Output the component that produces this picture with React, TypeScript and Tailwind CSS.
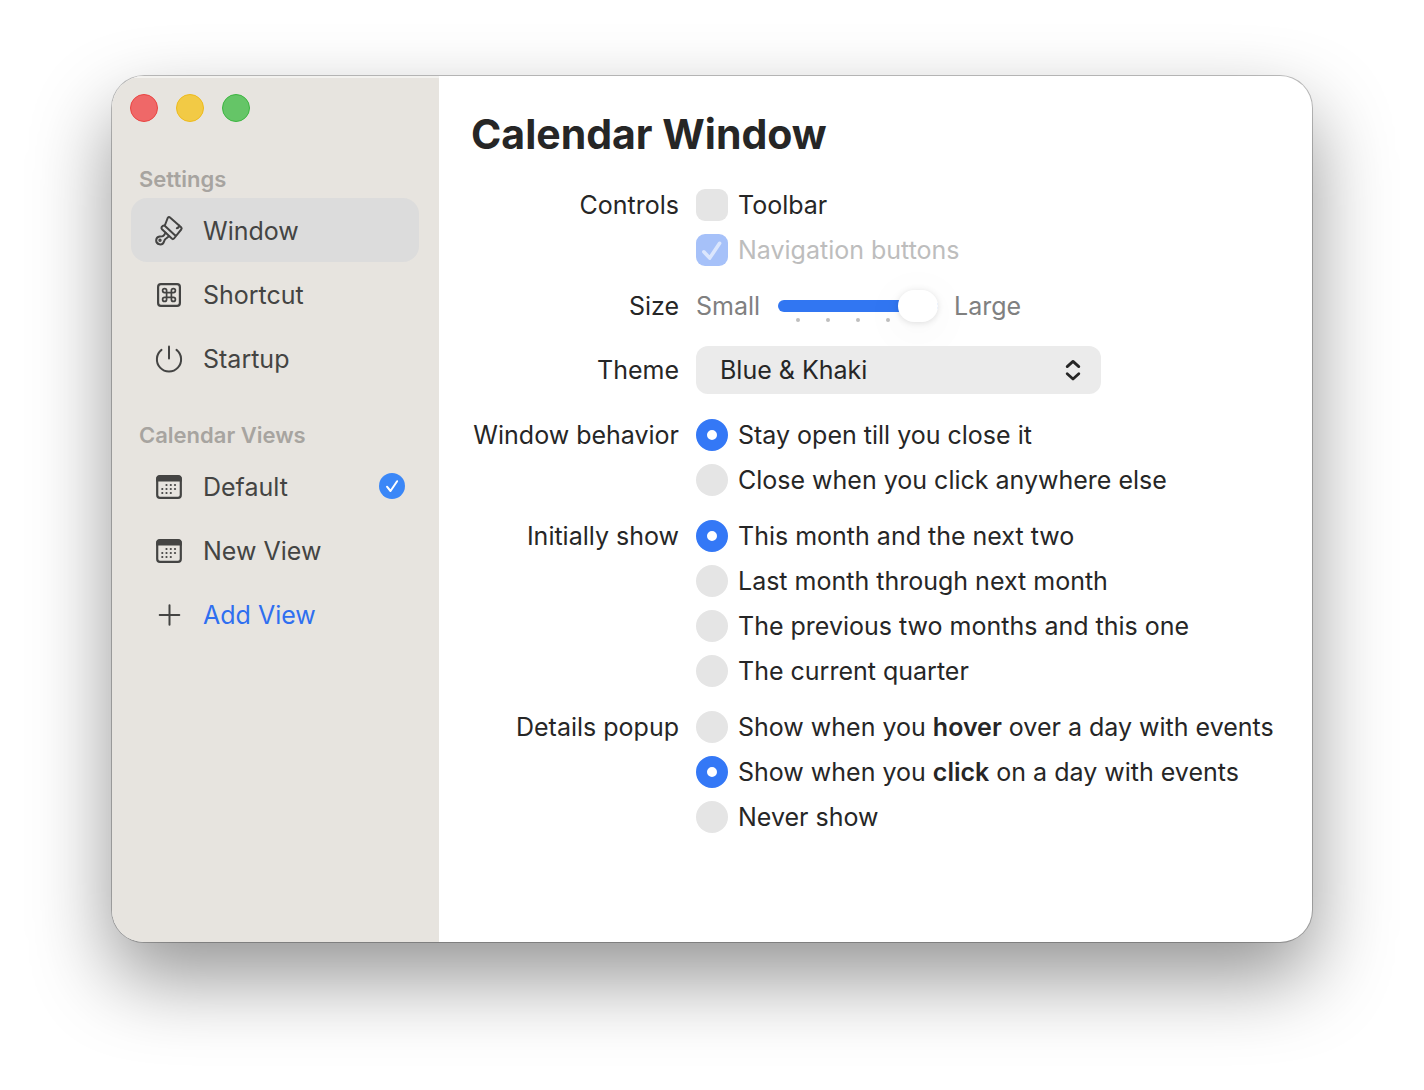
import { useState, type ReactNode } from "react";

function BrushIcon() {
  return (
    <svg viewBox="0 0 32 32" className="size-8" fill="none" stroke="currentColor" strokeWidth="2" strokeLinejoin="round" strokeLinecap="round" aria-hidden="true">
      <path d="M12 10L14.700 3Q15.700 1.200 17.300 2.700L28.100 12.200Q29.200 13.300 28.200 14.500L21 23.500Q20 24.700 18.800 23.600L9 14.300Q8 13.300 8.700 12L9.800 10.900Q11 10 12 11L22.500 20.800" />
      <path d="M26 10.400Q26.400 12.600 23.800 13.200" />
      <path d="M12.600 17.800L11 20.200Q10.400 21 9.300 21.200L6.600 21.400A4 4 0 1 0 10.900 26.800L11.700 24.900Q12.200 24 13.100 23.500L16 21.300" />
      <circle cx="7" cy="25.300" r="0.7" fill="currentColor" />
    </svg>
  );
}

function CommandIcon() {
  return (
    <svg viewBox="0 0 32 32" className="size-8" fill="none" stroke="currentColor" aria-hidden="true">
      <rect x="5.1" y="5.1" width="21.8" height="21.8" rx="2.8" strokeWidth="2.2" />
      <path strokeWidth="1.7" d="M13.6 13.6h4.8v4.8h-4.8zM13.6 13.6h-2a2 2 0 1 1 2-2zM18.4 13.6h2a2 2 0 1 0-2-2zM13.6 18.4h-2a2 2 0 1 0 2 2zM18.4 18.4h2a2 2 0 1 1-2 2z" />
    </svg>
  );
}

function PowerIcon() {
  return (
    <svg viewBox="0 0 32 32" className="size-8" fill="none" stroke="currentColor" strokeWidth="2" strokeLinecap="round" aria-hidden="true">
      <path d="M16 3.6v12" />
      <path d="M8.5 6.900a12.100 12.100 0 1 0 15 0" />
    </svg>
  );
}

function CalendarIcon() {
  const dots = [
    [13.5, 14], [17.8, 14], [22, 14],
    [9.3, 18], [13.5, 18], [17.8, 18], [22, 18],
    [9.3, 22], [13.5, 22], [17.8, 22],
  ];
  return (
    <svg viewBox="0 0 32 32" className="size-8" fill="none" stroke="currentColor" aria-hidden="true">
      <rect x="4.2" y="5.2" width="23.6" height="21.6" rx="2.8" strokeWidth="2.2" />
      <path d="M3.2 10.4V8a3.500 3.500 0 0 1 3.500-3.500h18.600A3.500 3.500 0 0 1 28.800 8v2.400z" fill="currentColor" stroke="none" />
      {dots.map(([x, y]) => (
        <circle key={`${x}-${y}`} cx={x} cy={y} r="1.1" fill="currentColor" stroke="none" />
      ))}
    </svg>
  );
}

function PlusIcon() {
  return (
    <svg viewBox="0 0 32 32" className="size-8" fill="none" stroke="currentColor" strokeWidth="2" strokeLinecap="round" aria-hidden="true">
      <path d="M16.500 6.200v19.600M6.700 16h19.600" />
    </svg>
  );
}

function NavItem({ icon, label, active, accent, trailing }: { icon: ReactNode; label: string; active?: boolean; accent?: boolean; trailing?: ReactNode }) {
  return (
    <li>
      <button
        type="button"
        aria-current={active ? "page" : undefined}
        className={`flex h-16 w-full items-center gap-[18px] rounded-2xl pt-0.5 pr-3.5 pl-[22px] text-left text-[#444443] ${active ? "bg-[#dcdcdc]" : ""}`}
      >
        {icon}
        <span className={`flex-1 ${accent ? "text-[#2f6ff0]" : ""}`}>{label}</span>
        {trailing}
      </button>
    </li>
  );
}

function Row({ label, children }: { label: string; children: ReactNode }) {
  return (
    <div role="group" aria-label={label} className="grid grid-cols-[208px_1fr] gap-x-[17px]">
      <div className="flex h-8 items-center justify-end whitespace-nowrap">{label}</div>
      <div className="flex flex-col items-start gap-[13px]">{children}</div>
    </div>
  );
}

function CheckOption({ label, checked, disabled }: { label: string; checked?: boolean; disabled?: boolean }) {
  return (
    <label className={`flex h-8 items-center gap-2.5 whitespace-nowrap ${disabled ? "text-[#bdbdbd]" : ""}`}>
      <span className="relative grid size-8 shrink-0 place-items-center">
        <input type="checkbox" defaultChecked={checked} disabled={disabled} className="peer size-8 appearance-none rounded-[9px] bg-[#e5e5e5] checked:bg-[#3478f6] disabled:checked:bg-[#a6c1f9]" />
        <svg viewBox="0 0 32 32" className="pointer-events-none absolute size-8 opacity-0 peer-checked:opacity-100" fill="none" stroke={disabled ? "#dbe6fd" : "#fff"} strokeWidth="3.6" strokeLinecap="round" strokeLinejoin="round" aria-hidden="true">
          <path d="M7.800 17.800l5.900 6.300 9.900-14.800" />
        </svg>
      </span>
      <span>{label}</span>
    </label>
  );
}

function RadioGroup({ name, options, initial }: { name: string; options: ReactNode[]; initial: number }) {
  const [selected, setSelected] = useState(initial);
  return (
    <>
      {options.map((option, i) => (
        <label key={i} className="flex h-8 items-center gap-2.5 whitespace-nowrap">
          <input
            type="radio"
            name={name}
            checked={selected === i}
            onChange={() => setSelected(i)}
            className="size-8 shrink-0 appearance-none rounded-full border-[#3478f6] bg-[#e5e5e5] checked:border-[11px] checked:bg-white"
          />
          <span>{option}</span>
        </label>
      ))}
    </>
  );
}

function SizeSlider() {
  return (
    <div className="flex h-8 items-center gap-4 text-[#808080]">
      <span className="w-[66px]">Small</span>
      <div className="relative h-8 w-40">
        <div className="absolute inset-x-[18px] bottom-0 flex justify-between" aria-hidden="true">
          {[0, 1, 2, 3, 4].map((i) => (
            <span key={i} className="size-1 rounded-full bg-[#bfbfbf]" />
          ))}
        </div>
        <input
          type="range"
          aria-label="Size"
          min={0}
          max={4}
          defaultValue={4}
          className="absolute inset-0 h-8 w-40 appearance-none bg-transparent [&::-webkit-slider-runnable-track]:h-3 [&::-webkit-slider-runnable-track]:rounded-full [&::-webkit-slider-runnable-track]:bg-[#3176f2] [&::-webkit-slider-thumb]:-mt-2.5 [&::-webkit-slider-thumb]:h-8 [&::-webkit-slider-thumb]:w-10 [&::-webkit-slider-thumb]:appearance-none [&::-webkit-slider-thumb]:rounded-full [&::-webkit-slider-thumb]:bg-white [&::-webkit-slider-thumb]:shadow-[0_1px_6px_rgba(0,0,0,0.12),0_8px_48px_rgba(0,0,0,0.06)]"
        />
      </div>
      <span>Large</span>
    </div>
  );
}

export default function App() {
  return (
    <div className="min-h-screen bg-white px-28 pt-19 pb-[148px] font-['Inter','Liberation_Sans',sans-serif] text-[25px] leading-8 text-[#262626]">
      <div className="flex min-h-[866px] overflow-hidden rounded-[32px] bg-white shadow-[0_0_0_1px_rgba(0,0,0,0.24),0_36px_80px_rgba(0,0,0,0.42)]">
        <aside className="w-[327px] shrink-0 bg-[#e7e4df] pt-[18px] pr-5 pl-[19px] shadow-[inset_0_2px_0_rgba(255,255,255,0.5)]">
          <div className="-ml-px flex gap-[18px]">
            <button type="button" aria-label="Close" className="size-7 rounded-full border border-[#e94441] bg-[#ef6868]" />
            <button type="button" aria-label="Minimize" className="size-7 rounded-full border border-[#edba1c] bg-[#f2ca45]" />
            <button type="button" aria-label="Zoom" className="size-7 rounded-full border border-[#3cb540] bg-[#65c567]" />
          </div>
          <nav>
            <h2 className="mt-[41px] mb-[3px] pl-2 text-[22px] font-semibold text-[#a7a4a0]">Settings</h2>
            <ul>
              <NavItem icon={<BrushIcon />} label="Window" active />
              <NavItem icon={<CommandIcon />} label="Shortcut" />
              <NavItem icon={<PowerIcon />} label="Startup" />
            </ul>
            <h2 className="mt-[29px] mb-[3px] pl-2 text-[22px] font-semibold text-[#a7a4a0]">Calendar Views</h2>
            <ul>
              <NavItem
                icon={<CalendarIcon />}
                label="Default"
                trailing={
                  <svg viewBox="0 0 26 26" className="mb-0.5 size-[26px]" role="img" aria-label="Selected">
                    <circle cx="13" cy="13" r="13" fill="#3b87f7" />
                    <path d="M8 13.700l3.500 4.300 6.600-9.800" fill="none" stroke="#fff" strokeWidth="2" strokeLinecap="round" strokeLinejoin="round" />
                  </svg>
                }
              />
              <NavItem icon={<CalendarIcon />} label="New View" />
              <NavItem icon={<PlusIcon />} label="Add View" accent />
            </ul>
          </nav>
        </aside>
        <main className="flex-1 pt-[30px] pl-8">
          <h1 className="text-[41px] leading-[56px] font-bold">Calendar Window</h1>
          <div className="mt-[27px] flex flex-col gap-6">
            <Row label="Controls">
              <CheckOption label="Toolbar" />
              <CheckOption label="Navigation buttons" checked disabled />
            </Row>
            <Row label="Size">
              <SizeSlider />
            </Row>
            <div className="grid grid-cols-[208px_1fr] items-center gap-x-[17px]">
              <label htmlFor="theme" className="text-right">Theme</label>
              <div className="relative w-[405px]">
                <select id="theme" className="block h-12 w-full appearance-none rounded-xl bg-[#ebebeb] pr-12 pl-6">
                  <option>Blue &amp; Khaki</option>
                </select>
                <svg viewBox="0 0 20 24" className="pointer-events-none absolute top-3 right-[18px] h-6 w-5" fill="none" stroke="currentColor" strokeWidth="2.8" strokeLinecap="round" strokeLinejoin="round" aria-hidden="true">
                  <path d="M4.200 8.600L10 3.400l5.800 5.200M4.200 15.800L10 21l5.800-5.200" />
                </svg>
              </div>
            </div>
          </div>
          <div className="mt-[25px] flex flex-col gap-6">
            <Row label="Window behavior">
              <RadioGroup name="behavior" initial={0} options={["Stay open till you close it", "Close when you click anywhere else"]} />
            </Row>
            <Row label="Initially show">
              <RadioGroup
                name="range"
                initial={0}
                options={["This month and the next two", "Last month through next month", "The previous two months and this one", "The current quarter"]}
              />
            </Row>
            <Row label="Details popup">
              <RadioGroup
                name="popup"
                initial={1}
                options={[
                  <>Show when you <b className="font-semibold">hover</b> over a day with events</>,
                  <>Show when you <b className="font-semibold">click</b> on a day with events</>,
                  "Never show",
                ]}
              />
            </Row>
          </div>
        </main>
      </div>
    </div>
  );
}
